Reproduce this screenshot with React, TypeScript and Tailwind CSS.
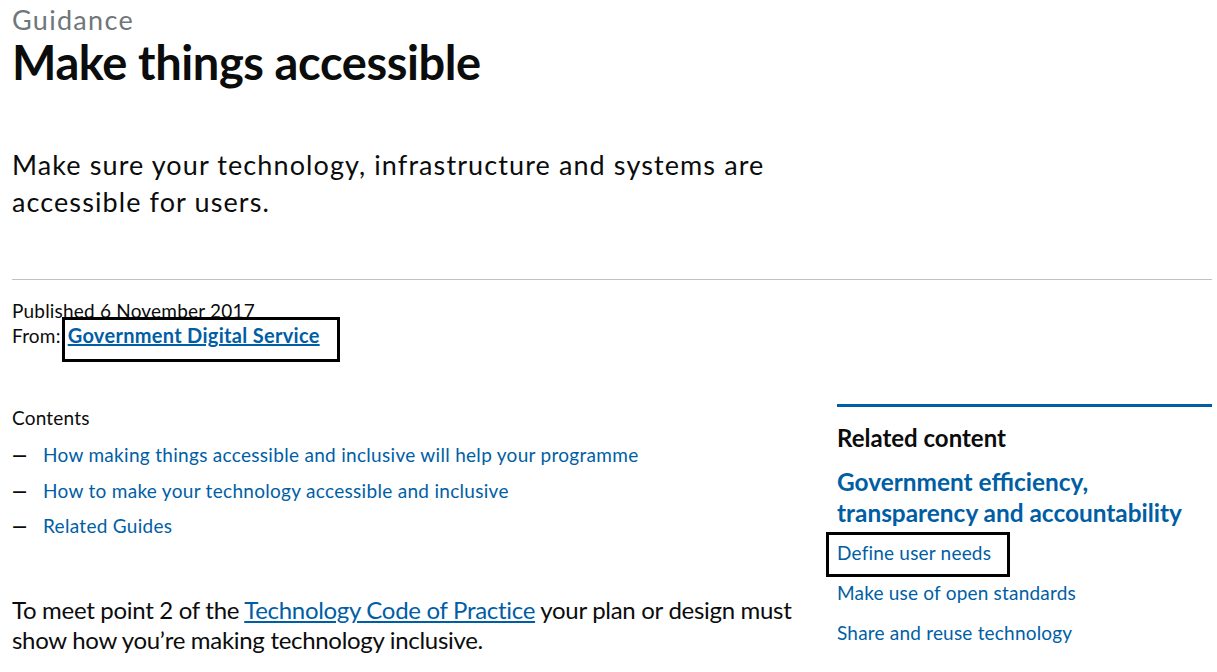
import React from 'react';

const contents = [
  'How making things accessible and inclusive will help your programme',
  'How to make your technology accessible and inclusive',
  'Related Guides',
];

const related = ['Define user needs', 'Make use of open standards', 'Share and reuse technology'];

function App() {
  return (
    <div className="min-h-screen bg-white text-[#0b0c0c] pl-[12px] pr-[5px]" style={{ fontFamily: 'Lato, "Noto Sans", sans-serif' }}>
      <div className="pt-[4px]">
        <p className="text-[27px] leading-[32px] text-[#6f777b] tracking-[1.3px]">Guidance</p>
        <h1 className="text-[47px] leading-[52px] font-bold tracking-[-0.4px]">Make things accessible</h1>
      </div>

      <p className="mt-[58px] text-[27px] leading-[37px] tracking-[1.1px] w-[800px]">
        Make sure your technology, infrastructure and systems are accessible for users.
      </p>

      <div className="mt-[59px] border-t border-[#bfc1c3]" />

      <div className="mt-[18px] text-[19px] leading-[25px] tracking-[0.2px]">
        <p>Published 6 November 2017</p>
        <p>
          From:{' '}
          <span className="relative inline-block ml-[2px]">
            <a href="#" className="font-bold text-[#005ea5] underline text-[20px] tracking-[0.3px]">Government Digital Service</a>
            <span className="absolute left-[-6px] top-[-6px] w-[278px] h-[45px] border-[3px] border-black pointer-events-none" />
          </span>
        </p>
      </div>

      <div className="flex mt-[57px]">
        <div className="w-[825px]">
          <p className="text-[19px] leading-[25px] tracking-[0.2px]">Contents</p>
          <ul className="mt-[12px] text-[19px] leading-[25px] tracking-[0.3px]">
            {contents.map((c) => (
              <li key={c} className="flex mb-[10.5px]">
                <span className="w-[31px] font-bold">—</span>
                <a href="#" className="text-[#005ea5]">{c}</a>
              </li>
            ))}
          </ul>
          <p className="mt-[57px] text-[24px] leading-[30px] tracking-[-0.3px] w-[790px]">
            To meet point 2 of the{' '}
            <a href="#" className="text-[#005ea5] underline">Technology Code of Practice</a> your plan or design must
            show how you’re making technology inclusive.
          </p>
        </div>

        <aside className="w-[375px] border-t-[3px] border-[#005ea5] mt-[-1px]">
          <h2 className="mt-[18px] text-[24px] leading-[26px] font-bold">Related content</h2>
          <h3 className="mt-[15px] text-[24.4px] leading-[31px] font-bold text-[#005ea5]">
            Government efficiency, transparency and accountability
          </h3>
          <ul className="mt-[12px] text-[19px] leading-[25px] tracking-[0.2px]">
            {related.map((r, i) => (
              <li key={r} className="mb-[15px]">
                <span className="relative inline-block">
                  <a href="#" className="text-[#005ea5]">{r}</a>
                  {i === 0 && (
                    <span className="absolute left-[-11px] top-[-8px] w-[184px] h-[45px] border-[3px] border-black pointer-events-none" />
                  )}
                </span>
              </li>
            ))}
          </ul>
        </aside>
      </div>
    </div>
  );
}

export default App;
